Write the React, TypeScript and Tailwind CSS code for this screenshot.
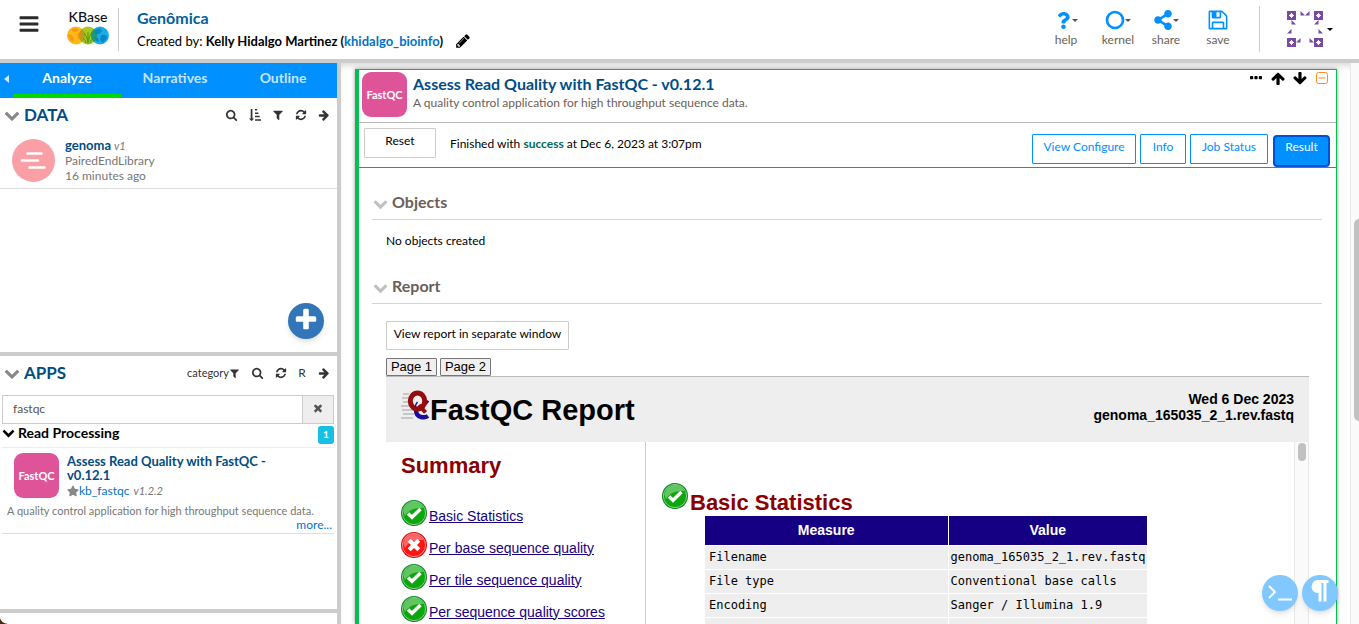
import type { ReactNode } from "react";
import { FaQuestion, FaShareAlt, FaStar } from "react-icons/fa";

const ICONS = {
  bars: "M1664 1344v128q0 26-19 45t-45 19h-1408q-26 0-45-19t-19-45v-128q0-26 19-45t45-19h1408q26 0 45 19t19 45zm0-512v128q0 26-19 45t-45 19h-1408q-26 0-45-19t-19-45v-128q0-26 19-45t45-19h1408q26 0 45 19t19 45zm0-512v128q0 26-19 45t-45 19h-1408q-26 0-45-19t-19-45v-128q0-26 19-45t45-19h1408q26 0 45 19t19 45z",
  search: "M1152 832q0-185-131.5-316.5t-316.5-131.5-316.5 131.5-131.5 316.5 131.5 316.5 316.5 131.5 316.5-131.5 131.5-316.5zm512 832q0 52-38 90t-90 38q-54 0-90-38l-343-342q-179 124-399 124-143 0-273.500-55.500t-225-150-150-225-55.500-273.500 55.500-273.500 150-225 225-150 273.500-55.500 273.500 55.500 225 150 150 225 55.500 273.500q0 220-124 399l343 343q37 37 37 90z",
  sort: "M736 1440q0 12-10 24l-319 319q-10 9-23 9-12 0-23-9l-320-320q-15-16-7-35 8-20 30-20h192v-1376q0-14 9-23t23-9h192q14 0 23 9t9 23v1376h192q14 0 23 9t9 23zM896 1536h896v224h-896zM896 1024h704v224h-704zM896 512h512v224h-512zM896 0h320v224h-320z",
  filter: "M1595 295q17 41-14 70l-493 493v742q0 42-39 59-13 5-25 5-27 0-45-19l-256-256q-19-19-19-45v-486l-493-493q-31-29-14-70 17-39 59-39h1280q42 0 59 39z",
  refresh: "M1639 1056q0 5-1 7-64 268-268 434.500t-478 166.500q-146 0-282.500-55t-243.500-157l-129 129q-19 19-45 19t-45-19-19-45v-448q0-26 19-45t45-19h448q26 0 45 19t19 45-19 45l-137 137q71 66 161 102t187 36q134 0 250-65t186-179q11-17 53-117 8-23 30-23h192q13 0 22.500 9.500t9.500 22.500zm25-800v448q0 26-19 45t-45 19h-448q-26 0-45-19t-19-45 19-45l138-138q-148-137-349-137-134 0-250 65t-186 179q-11 17-53 117-8 23-30 23h-199q-13 0-22.500-9.500t-9.500-22.500v-7q65-268 270-434.500t480-166.500q146 0 284 55.500t245 156.500l130-129q19-19 45-19t45 19 19 45z",
  arrow: "M1600 960q0 54-37 91l-651 651q-39 37-91 37-51 0-90-37l-75-75q-38-38-38-91t38-91l293-293h-704q-52 0-84.500-37.500t-32.500-90.500v-128q0-53 32.500-90.500t84.500-37.500h704l-293-294q-38-36-38-90t38-90l75-75q38-38 90-38 53 0 91 38l651 651q37 35 37 90z",
  plus: "M1600 736v192q0 40-28 68t-68 28h-416v416q0 40-28 68t-68 28h-192q-40 0-68-28t-28-68v-416h-416q-40 0-68-28t-28-68v-192q0-40 28-68t68-28h416v-416q0-40 28-68t68-28h192q40 0 68 28t28 68v416h416q40 0 68 28t28 68z",
  times: "M1490 1322q0 40-28 68l-136 136q-28 28-68 28t-68-28l-294-294-294 294q-28 28-68 28t-68-28l-136-136q-28-28-28-68t28-68l294-294-294-294q-28-28-28-68t28-68l136-136q28-28 68-28t68 28l294 294 294-294q28-28 68-28t68 28l136 136q28 28 28 68t-28 68l-294 294 294 294q28 28 28 68z",
  chevron: "M1683 808l-742 741q-19 19-45 19t-45-19l-742-741q-19-19-19-45.500t19-45.500l166-165q19-19 45-19t45 19l531 531 531-531q19-19 45-19t45 19l166 165q19 19 19 45.500t-19 45.500z",
  pencil: "M491 1536l91-91-235-235-91 91v107h128v128h107zm523-928q0-22-22-22-10 0-17 7l-542 542q-7 7-7 17 0 22 22 22 10 0 17-7l542-542q7-7 7-17zm-54-192l416 416-832 832h-416v-416zm683 96q0 53-37 90l-166 166-416-416 166-165q36-38 90-38 53 0 91 38l235 234q37 39 37 91z",
  save: "M512 1536h768v-384h-768v384zm896 0h128v-896q0-14-10-38.500t-20-34.500l-281-281q-10-10-34-20t-39-10v416q0 40-28 68t-68 28h-576q-40 0-68-28t-28-68v-416h-128v1280h128v-416q0-40 28-68t68-28h832q40 0 68 28t28 68v416zm-384-928v-320q0-13-9.500-22.500t-22.500-9.500h-192q-13 0-22.500 9.500t-9.500 22.500v320q0 13 9.500 22.500t22.500 9.500h192q13 0 22.500-9.500t9.500-22.500zm640 32v928q0 40-28 68t-68 28h-1344q-40 0-68-28t-28-68v-1344q0-40 28-68t68-28h928q40 0 88 20t76 48l280 280q28 28 48 76t20 88z",
};

function Icon({ name, className }: { name: keyof typeof ICONS; className: string }) {
  return (
    <svg viewBox="0 0 1792 1792" className={`shrink-0 ${className}`} fill="currentColor" aria-hidden="true">
      <path d={ICONS[name]} />
    </svg>
  );
}

function Caret({ className = "" }: { className?: string }) {
  return (
    <svg viewBox="0 0 6 3" className={`h-[3px] w-[6px] shrink-0 ${className}`} fill="currentColor" aria-hidden="true">
      <path d="M0 0h6L3 3z" />
    </svg>
  );
}

function KBaseLogo() {
  return (
    <a href="#home" className="flex w-[42px] flex-col items-center">
      <span className="text-[14px] font-medium leading-[18px] text-[#111]">KBase</span>
      <svg viewBox="0 0 42 20" className="h-5 w-[42px]" aria-hidden="true">
        <circle cx="9" cy="9.500" r="9" fill="#fdb913" />
        <circle cx="21" cy="9.500" r="9" fill="#a8c81c" />
        <circle cx="33" cy="9.500" r="9" fill="#15aee5" />
        <path d="M15 2.800a9 9 0 0 1 0 13.400 9 9 0 0 1 0-13.400z" fill="#b3a11b" />
        <path d="M27 2.800a9 9 0 0 1 0 13.400 9 9 0 0 1 0-13.400z" fill="#1a9a77" />
        <path d="M1 8l4 1 2 3-1 4-3-2zM4 3l5-1 3 2-3 2-3 0zM10 8l4-2v4l-3 4z" fill="#f58220" opacity=".6" />
        <path d="M21 18V6M21 16q-1-6-4-9M21 16q1-6 4-10M19 17q-1-4-3-5M23 17q1-4 3-4" stroke="#4a9a1f" strokeWidth="1" fill="none" />
        <path d="M28 4l5-2 2 3-3 3-4 0zM34 9l5 0 1 3-4 5-3-3zM28 11l3 1 1 4-3-1z" fill="#0a76bd" opacity=".75" />
      </svg>
    </a>
  );
}

function HeaderButton({ label, children, caret, className }: { label: string; children: ReactNode; caret?: boolean; className: string }) {
  return (
    <button type="button" className={`flex flex-col items-center text-[#6b6057] ${className}`}>
      <span className="flex h-6 items-center text-[#0090ff]">
        {children}
        {caret && <Caret className="text-[#555]" />}
      </span>
      <span className="text-[12px] leading-4">{label}</span>
    </button>
  );
}

function Identicon() {
  const corner = "M0 0h9v9H0zM4 2v1H3v1H2v1h1v1h1v1h1V6h1V5h1V4H6V3H5V2z";
  return (
    <svg viewBox="0 0 36 36" className="h-9 w-9" fill="#7b48a5" fillRule="evenodd" aria-hidden="true">
      <path d={corner} />
      <path d={corner} transform="translate(27 0)" />
      <path d={corner} transform="translate(0 27)" />
      <path d={corner} transform="translate(27 27)" />
      <path d="M13.500 0v4.500H18zM22.500 0v4.500H18zM4.500 9v4.500H9zM31.500 9v4.500H27zM4.500 18v4.500H0zM31.500 18v4.500H36zM13.500 27v4.500H9zM22.500 27v4.500H27z" />
    </svg>
  );
}

function FastQCTile() {
  return (
    <div className="flex h-[45px] w-[45px] shrink-0 items-center justify-center rounded-[9px] bg-[#df5498] text-[11px] font-bold leading-none text-white">
      FastQC
    </div>
  );
}

function PanelButton({ name, label }: { name: keyof typeof ICONS; label: string }) {
  return (
    <button type="button" aria-label={label} className="flex w-[23px] justify-center text-[#333]">
      <Icon name={name} className="h-3 w-3" />
    </button>
  );
}

function Status({ ok }: { ok: boolean }) {
  return (
    <svg viewBox="0 0 26 26" className="h-[26px] w-[26px] shrink-0" aria-hidden="true">
      <circle cx="13" cy="13" r="13" fill={ok ? "#0a8a1c" : "#e00808"} />
      <circle cx="13" cy="13" r="11.600" fill={ok ? "#0da60d" : "#ff1414"} stroke={ok ? "#a4dcaa" : "#ffb0b0"} strokeWidth=".8" />
      <path d="M2.500 12a10.500 10.500 0 0 1 20-4Q9 7 4 16z" fill="#fff" opacity=".35" />
      {ok ? (
        <path d="M7 13.500l4 3.800L19.500 9" fill="none" stroke="#fff" strokeWidth="3.400" />
      ) : (
        <path d="M8.200 8.200l9.600 9.600M17.800 8.200l-9.600 9.600" fill="none" stroke="#fff" strokeWidth="4.200" />
      )}
    </svg>
  );
}

function QCLogo() {
  return (
    <svg viewBox="0 0 29 32" className="h-8 w-[29px] shrink-0" aria-hidden="true">
      <path d="M2 4h6M1 8h6M2 12h7M0 16h11M1 20h11M2 24h11M0 28h12" stroke="#888" strokeWidth="1" opacity=".75" />
      <path d="M27 13q-3-2-7-2-5 2-5 8.500t5 7.500q4 1 7-1" fill="none" stroke="#1c0a9c" strokeWidth="4.500" />
      <ellipse cx="16.500" cy="11" rx="7.200" ry="8" fill="#eee" stroke="#950c0c" strokeWidth="5" />
      <path d="M18 15l6.500 7.500" stroke="#950c0c" strokeWidth="4" />
      <path d="M14.500 17q0-3 2-5" stroke="#1c0a9c" strokeWidth="1.500" fill="none" />
    </svg>
  );
}

function Header() {
  return (
    <header className="flex h-[63px] shrink-0 border-b-4 border-[#ccc] bg-white">
      <button type="button" aria-label="Menu" className="ml-[18px] mt-[13px] h-[22px] w-[22px] text-[#2b2b2b]">
        <Icon name="bars" className="h-[22px] w-[22px]" />
      </button>
      <div className="ml-[27px] mt-2 flex h-[43px] border-r border-[#ccc] pr-[9px]">
        <KBaseLogo />
      </div>
      <div className="ml-[18px] min-w-0 flex-1 pt-[7px]">
        <h1 className="text-[16px] font-bold leading-[22px] text-[#01609b]">Genômica</h1>
        <div className="flex items-center pt-1 text-[13px] leading-4 text-black">
          <p>
            Created by:{" "}
            <b>
              Kelly Hidalgo Martinez (<a href="#user" className="text-[#0073c6]">khidalgo_bioinfo</a>)
            </b>
          </p>
          <button type="button" aria-label="Rename" className="ml-3">
            <Icon name="pencil" className="h-4 w-4" />
          </button>
        </div>
      </div>
      <div className="mr-[26px] flex pt-2">
        <HeaderButton label="help" caret className="w-[52px]"><FaQuestion size={17} /></HeaderButton>
        <HeaderButton label="kernel" caret className="w-[52px]">
          <svg viewBox="0 0 20 20" className="h-5 w-5" aria-hidden="true">
            <circle cx="10" cy="10" r="8" fill="none" stroke="currentColor" strokeWidth="2.600" />
          </svg>
        </HeaderButton>
        <HeaderButton label="share" caret className="w-[44px]"><FaShareAlt size={20} /></HeaderButton>
        <HeaderButton label="save" className="w-[60px]"><Icon name="save" className="h-[22px] w-[22px]" /></HeaderButton>
        <button type="button" aria-label="Account" className="-mt-0.5 ml-[11px] flex h-[46px] items-center gap-1 border-l border-[#ccc] pl-[27px]">
          <Identicon />
          <Caret />
        </button>
      </div>
    </header>
  );
}

function Sidebar() {
  return (
    <aside className="flex w-[341px] shrink-0 flex-col border-r-4 border-[#ccc] bg-white">
      <nav className="flex h-[35px] shrink-0 bg-[#0090ff] text-center text-[14px] font-bold leading-[30px]">
        <button type="button" aria-label="Collapse" className="flex w-[13px] items-center justify-center pb-1 text-[#cfe9ff]">
          <svg viewBox="0 0 5 8" className="h-2 w-[5px]" fill="currentColor" aria-hidden="true"><path d="M5 0v8L0 4z" /></svg>
        </button>
        <button type="button" className="flex-1 border-b-4 border-[#00d900] pb-[2px] text-white">Analyze</button>
        <button type="button" className="flex-1 border-b-4 border-transparent pb-[2px] text-[#c4e4ff]">Narratives</button>
        <button type="button" className="flex-1 border-b-4 border-transparent pb-[2px] text-[#c4e4ff]">Outline</button>
      </nav>

      <section className="relative flex h-[258px] shrink-0 flex-col border-b-4 border-[#ccc]">
        <div className="flex h-[34px] items-center pl-[4px] pr-[2px]">
          <Icon name="chevron" className="h-4 w-4 text-[#888]" />
          <h2 className="ml-1 flex-1 text-[17px] font-bold text-[#014d83]">DATA</h2>
          <PanelButton name="search" label="Search data" />
          <PanelButton name="sort" label="Sort data" />
          <PanelButton name="filter" label="Filter data" />
          <PanelButton name="refresh" label="Refresh data" />
          <PanelButton name="arrow" label="Expand data" />
        </div>
        <div className="flex h-[57px] items-center border-b border-[#ddd] pl-3">
          <svg viewBox="0 0 43 43" className="h-[43px] w-[43px] shrink-0" aria-hidden="true">
            <circle cx="21.500" cy="21.500" r="21.500" fill="#fa9fa5" />
            <path d="M15.500 14.500h14M10 21.500h16M17.500 28.500h15" stroke="#fff" strokeWidth="2.600" strokeLinecap="round" />
          </svg>
          <div className="ml-[10px] text-[12px] leading-[15px] text-[#777]">
            <p><b className="text-[13px] text-[#014d83]">genoma</b> <i className="text-[11px]">v1</i></p>
            <p>PairedEndLibrary</p>
            <p>16 minutes ago</p>
          </div>
        </div>
        <button type="button" aria-label="Add data" className="absolute bottom-[13px] right-[13px] flex h-9 w-9 items-center justify-center rounded-full bg-[#3276b9] pb-[2px] text-white shadow-md">
          <Icon name="plus" className="h-[26px] w-[26px]" />
        </button>
      </section>

      <section className="flex min-h-0 flex-1 flex-col">
        <div className="flex h-[34px] shrink-0 items-center pl-[4px] pr-[2px]">
          <Icon name="chevron" className="h-4 w-4 text-[#888]" />
          <h2 className="ml-1 flex-1 text-[17px] font-bold text-[#014d83]">APPS</h2>
          <button type="button" className="mr-[6px] flex items-center text-[11px] text-[#333]">
            category<Icon name="filter" className="h-[11px] w-[11px]" />
          </button>
          <PanelButton name="search" label="Search apps" />
          <PanelButton name="refresh" label="Refresh apps" />
          <button type="button" className="w-5 text-[12px] text-[#333]">R</button>
          <PanelButton name="arrow" label="Expand apps" />
        </div>
        <div className="ml-[2px] mr-[3px] mt-[5px] flex h-[29px] shrink-0 border border-[#ccc]">
          <input aria-label="Search apps" defaultValue="fastqc" className="min-w-0 flex-1 pb-[2px] pl-[10px] text-[12px] text-[#555] outline-none" />
          <button type="button" aria-label="Clear search" className="flex w-[31px] items-center justify-center border-l border-[#ccc] bg-[#eee] pb-1 text-[#555]">
            <Icon name="times" className="h-3 w-3" />
          </button>
        </div>
        <div className="ml-[2px] mr-[3px] flex h-6 shrink-0 items-start border-b border-[#eee] pt-[2px]">
          <Icon name="chevron" className="h-[13px] w-[13px] text-black" />
          <h3 className="ml-[3px] flex-1 text-[14px] font-bold leading-[14px] text-black">Read Processing</h3>
          <span className="h-[18px] w-4 rounded-[3px] bg-[#16c0e4] text-center text-[10px] font-bold leading-4 text-white">1</span>
        </div>
        <article className="ml-[2px] mr-[3px] shrink-0 border-b border-[#ddd] pb-[2px] pt-[5px] text-[12px] text-[#777]">
          <div className="flex pl-3">
            <FastQCTile />
            <div className="ml-2 min-w-0 flex-1 pt-[1px]">
              <h4 className="max-w-[230px] text-[13px] font-bold leading-[14px] text-[#014d83]">Assess Read Quality with FastQC - v0.12.1</h4>
              <p className="flex items-center leading-[18px]">
                <FaStar size={12} color="#888" />
                <a href="#kb_fastqc" className="text-[#0073c6]">kb_fastqc</a>
                <i className="ml-1 text-[11px]">v1.2.2</i>
              </p>
            </div>
          </div>
          <p className="whitespace-nowrap pl-[5px] pt-1 text-[11px] leading-[14px]">A quality control application for high throughput sequence data.</p>
          <a href="#more" className="block pr-[2px] text-right leading-[13px] text-[#0073c6]">more...</a>
        </article>
      </section>
      <div className="flex h-[15px] shrink-0 items-end border-t-4 border-[#ccc]">
        <svg viewBox="0 0 8 6" className="h-[6px] w-2" aria-hidden="true"><path d="M0 0q1 5 8 6H0z" fill="#4a2a0c" /></svg>
      </div>
    </aside>
  );
}

function OutlineTab({ children, className }: { children: ReactNode; className: string }) {
  return (
    <button type="button" className={`h-[30px] rounded-[1px] border border-[#0090ff] bg-white pb-1 text-[12px] text-[#0090ff] ${className}`}>
      {children}
    </button>
  );
}

function SectionTitle({ children }: { children: ReactNode }) {
  return (
    <h3 className="flex h-[35px] items-center border-b border-[#ddd3cd] pl-[1px] text-[16px] font-bold text-[#6b6057]">
      <Icon name="chevron" className="mr-1 mt-[2px] h-[15px] w-[15px] text-[#c0c0c0]" />
      {children}
    </h3>
  );
}

const CHECKS = [
  { label: "Basic Statistics", ok: true },
  { label: "Per base sequence quality", ok: false },
  { label: "Per tile sequence quality", ok: true },
  { label: "Per sequence quality scores", ok: true },
];

const STATS = [
  ["Filename", "genoma_165035_2_1.rev.fastq"],
  ["File type", "Conventional base calls"],
  ["Encoding", "Sanger / Illumina 1.9"],
  ["", ""],
];

function Report() {
  return (
    <div className="ml-[14px] mr-[13px] flex min-h-0 flex-1 flex-col font-['Liberation_Sans',Arial,sans-serif] text-black">
      <div className="flex h-[18px] shrink-0 gap-[3px] text-[13px] leading-4">
        <button type="button" className="w-[51px] rounded-[1px] border border-[#767676] bg-[#efefef]">Page 1</button>
        <button type="button" className="w-[51px] rounded-[1px] border border-[#767676] bg-[#efefef]">Page 2</button>
      </div>
      <div className="flex h-[66px] shrink-0 items-center border-t border-[#bbb] bg-[#eee] pl-[15px] pr-[15px]">
        <div className="flex items-center">
          <div className="pb-2"><QCLogo /></div>
          <h2 className="text-[29px] font-bold leading-8">FastQC Report</h2>
        </div>
        <p className="ml-auto pb-[5px] text-right text-[14px] font-bold leading-4">
          Wed 6 Dec 2023<br />genoma_165035_2_1.rev.fastq
        </p>
      </div>
      <div className="flex min-h-0 flex-1">
        <div className="w-[260px] shrink-0 overflow-hidden border-r border-[#ccc] pl-[15px] pt-[10px]">
          <h3 className="text-[22px] font-bold leading-7 text-[#8b0000]">Summary</h3>
          <ul className="mt-5 flex flex-col gap-[6px]">
            {CHECKS.map((c) => (
              <li key={c.label} className="flex h-[26px] items-center gap-[2px] whitespace-nowrap">
                <Status ok={c.ok} />
                <a href="#check" className="pt-[5px] text-[14px] leading-5 text-[#1a0080] underline">{c.label}</a>
              </li>
            ))}
          </ul>
        </div>
        <div className="min-w-0 flex-1 overflow-hidden pl-4 pt-[41px]">
          <h3 className="flex h-[33px] items-start gap-[2px] text-[22px] font-bold leading-[39px] text-[#8b0000]">
            <Status ok /> Basic Statistics
          </h3>
          <table className="ml-[43px] w-[442px] table-fixed border-collapse text-left">
            <thead>
              <tr className="h-[29px] bg-[#150083] text-center text-[14px] text-white">
                <th className="w-[243px] border-r border-white">Measure</th>
                <th>Value</th>
              </tr>
            </thead>
            <tbody className="font-['DejaVu_Sans_Mono',monospace] text-[12px]">
              {STATS.map(([k, v], i) => (
                <tr key={i} className="h-6 border-t border-white bg-[#eee]">
                  <td className="border-r border-white pl-1">{k}</td>
                  <td className="whitespace-nowrap pl-[2px]">{v}</td>
                </tr>
              ))}
            </tbody>
          </table>
        </div>
        <div className="flex w-[15px] shrink-0 justify-center border-x border-[#e8e8e8] bg-[#fafafa] pt-[1px]">
          <div className="h-[18px] w-2 rounded-full bg-[#c1c1c1]" />
        </div>
      </div>
    </div>
  );
}

function Cell() {
  return (
    <article className="ml-[14px] mr-[13px] mt-[6px] flex min-w-0 flex-1 flex-col border-l-4 border-r border-t border-[#00c04f] bg-white shadow-[0_0_4px_rgba(0,0,0,0.4)]">
      <div className="flex h-[53px] shrink-0 border-b border-[#bbb] pl-[3px] pt-[2px]">
        <FastQCTile />
        <div className="ml-[6px] flex-1 pt-[2px]">
          <h2 className="text-[16px] font-bold leading-5 text-[#014d83]">Assess Read Quality with FastQC - v0.12.1</h2>
          <p className="pt-[1px] text-[12px] leading-4 text-[#6b6057]">A quality control application for high throughput sequence data.</p>
        </div>
        <div className="mr-2 flex h-3 items-center gap-2 text-black">
          <button type="button" aria-label="Cell menu">
            <svg viewBox="0 0 12 4" className="h-1 w-3" fill="currentColor" aria-hidden="true">
              <rect width="3.200" height="3.200" rx=".8" /><rect x="4.400" width="3.200" height="3.200" rx=".8" /><rect x="8.800" width="3.200" height="3.200" rx=".8" />
            </svg>
          </button>
          <button type="button" aria-label="Move up"><Icon name="arrow" className="h-[15px] w-[15px] -rotate-90" /></button>
          <button type="button" aria-label="Move down"><Icon name="arrow" className="h-[15px] w-[15px] rotate-90" /></button>
          <button type="button" aria-label="Minimize" className="text-[#ff8c1a]">
            <svg viewBox="0 0 12 12" className="h-3 w-3" fill="none" stroke="currentColor" aria-hidden="true">
              <rect x=".5" y=".5" width="11" height="11" rx="2" /><path d="M2.500 6h7" />
            </svg>
          </button>
        </div>
      </div>
      <div className="flex h-[45px] shrink-0 items-start border-b border-[#0090ff] pl-[5px] pr-[6px] pt-[5px]">
        <button type="button" className="h-[30px] w-[72px] rounded-[1px] border border-[#ccc] bg-white pb-1 text-[12px] text-black">Reset</button>
        <p className="ml-[14px] pt-2 text-[12px] leading-4 text-black">
          Finished with <b className="text-[#00695c]">success</b> at Dec 6, 2023 at 3:07pm
        </p>
        <div className="ml-auto flex gap-1 pt-[6px]">
          <OutlineTab className="w-[104px]">View Configure</OutlineTab>
          <OutlineTab className="w-[46px]">Info</OutlineTab>
          <OutlineTab className="w-[78px]">Job Status</OutlineTab>
          <button type="button" className="ml-[1px] mt-[1px] h-8 w-[57px] rounded-[4px] border-2 border-[#0050d8] bg-[#0090ff] pb-2 text-[12px] text-white">Result</button>
        </div>
      </div>
      <div className="flex min-h-0 flex-1 flex-col pl-[13px] pr-[14px] pt-[17px]">
        <SectionTitle>Objects</SectionTitle>
        <p className="pl-[14px] pt-3 text-[12px] leading-[18px] text-black">No objects created</p>
        <div className="pt-[19px]"><SectionTitle>Report</SectionTitle></div>
        <button type="button" className="mb-2 ml-[14px] mt-[17px] h-[29px] w-[183px] shrink-0 rounded-[1px] border border-[#ccc] bg-white pb-[3px] text-[12px] text-black">View report in separate window</button>
        <Report />
      </div>
    </article>
  );
}

export default function App() {
  return (
    <div className="relative flex h-screen flex-col overflow-hidden bg-white font-['Lato',sans-serif]">
      <Header />
      <div className="flex min-h-0 flex-1">
        <Sidebar />
        <main className="flex min-w-0 flex-1 bg-white shadow-[inset_0_6px_6px_-3px_rgba(0,0,0,0.15)]">
          <Cell />
          <div className="w-[9px] shrink-0 border-l border-[#e8e8e8] bg-[#fafafa] pl-[3px] pt-[156px]">
            <div className="h-[202px] rounded-l-full bg-[#c1c1c1]" />
          </div>
        </main>
      </div>
      <div className="absolute bottom-[13px] right-[21px] flex gap-1 text-white">
        <button type="button" aria-label="Add code cell" className="flex h-9 w-9 items-center justify-center rounded-full bg-[#80c8ff] shadow-md">
          <svg viewBox="0 0 24 16" className="h-4 w-6" fill="none" stroke="currentColor" strokeWidth="2" aria-hidden="true">
            <path d="M1 1l6 6-6 6M10 14.500h14" />
          </svg>
        </button>
        <button type="button" aria-label="Add text cell" className="flex h-9 w-9 items-center justify-center rounded-full bg-[#80c8ff] pb-1 shadow-md">
          <svg viewBox="0 0 18 22" className="h-[22px] w-[18px]" aria-hidden="true">
            <path d="M6.500 0h11v3h-2v18.500h-3V3h-2v18.500h-3V13q-6 0-7-6 1-7 6-7z" fill="currentColor" />
          </svg>
        </button>
      </div>
    </div>
  );
}
